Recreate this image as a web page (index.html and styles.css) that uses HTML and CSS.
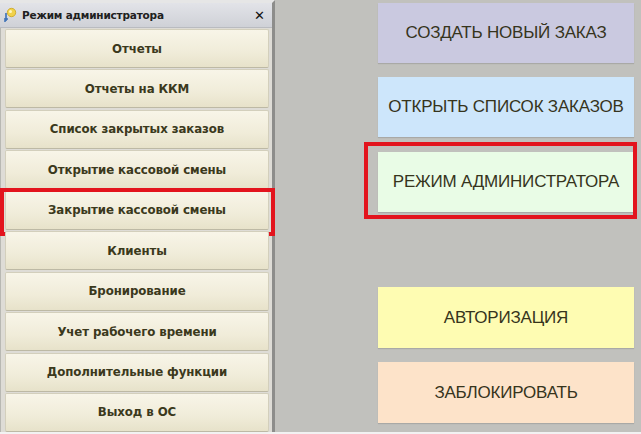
FILE: index.html
```html
<!DOCTYPE html>
<html lang="ru">
<head>
<meta charset="utf-8">
<link rel="stylesheet" href="styles.css">
</head>
<body>
<div class="screen">
  <section class="panel">
    <div class="titlebar">
      <svg class="ticon" width="14" height="16" viewBox="0 0 14 16">
        <path d="M3 6 L3 14 M1 12 L5 12 M1 14 L3 14" stroke="#3a6fb5" stroke-width="1.6" fill="none"/>
        <circle cx="8.5" cy="5.5" r="4.2" fill="#f1d24a" stroke="#c9a320" stroke-width="0.8"/>
        <circle cx="7.5" cy="4.5" r="1.5" fill="#fff6c0"/>
      </svg>
      <span class="ttext">Режим администратора</span>
      <span class="tclose">✕</span>
    </div>
    <div class="menu">
      <div class="mbtn">Отчеты</div>
      <div class="mbtn">Отчеты на ККМ</div>
      <div class="mbtn">Список закрытых заказов</div>
      <div class="mbtn">Открытие кассовой смены</div>
      <div class="mbtn mark-left">Закрытие кассовой смены</div>
      <div class="mbtn">Клиенты</div>
      <div class="mbtn">Бронирование</div>
      <div class="mbtn">Учет рабочего времени</div>
      <div class="mbtn">Дополнительные функции</div>
      <div class="mbtn">Выход в ОС</div>
    </div>
  </section>
  <section class="desk">
    <div class="big b-lav">СОЗДАТЬ НОВЫЙ ЗАКАЗ</div>
    <div class="big b-blue">ОТКРЫТЬ СПИСОК ЗАКАЗОВ</div>
    <div class="big b-green mark-right">РЕЖИМ АДМИНИСТРАТОРА</div>
    <div class="big b-yellow">АВТОРИЗАЦИЯ</div>
    <div class="big b-peach">ЗАБЛОКИРОВАТЬ</div>
  </section>
</div>
</body>
</html>
```

FILE: styles.css
```css
html, body {
  margin: 0;
  padding: 0;
  background: #c1c1bf;
}
.screen {
  width: 641px;
  height: 434px;
  display: flex;
  overflow: hidden;
  background: #c1c1bd;
  border-bottom: 2px solid #f2f2f2;
  box-sizing: border-box;
}
.panel {
  position: relative;
  z-index: 1;
  width: 275px;
  flex: none;
  display: flex;
  flex-direction: column;
  background: #dedcd6;
  border-top: 3px solid #e6e6e6;
  border-right: 3px solid #8d8d8b;
  box-sizing: border-box;
}
.titlebar {
  height: 24px;
  display: flex;
  align-items: center;
  background: linear-gradient(#e2e3e8, #cfd1d7);
  border-bottom: 1px solid #b9bbc0;
  padding: 0 6px 0 3px;
  font-family: "DejaVu Sans", sans-serif;
  font-weight: bold;
  font-size: 10.5px;
  color: #202020;
}
.ticon { flex: none; margin-right: 5px; }
.ttext { flex: 1; letter-spacing: -0.2px; }
.tclose { font-size: 13px; font-weight: bold; color: #111; margin-right: 1px; }
.menu {
  display: flex;
  flex-direction: column;
  gap: 1.45px;
  padding: 1px 3px 0 4px;
  border-left: 1px solid #b8b8b2;
}
.mbtn {
  position: relative;
  height: 39px;
  flex: none;
  display: flex;
  align-items: center;
  justify-content: center;
  box-sizing: border-box;
  background: linear-gradient(#f8f5e8, #f0ecd9 60%, #e7e2ca);
  border: 1px solid #d3cfbc;
  border-bottom-color: #bdb9a5;
  border-radius: 2px;
  font-family: "DejaVu Sans", sans-serif;
  font-weight: bold;
  font-size: 11.8px;
  letter-spacing: -0.1px;
  color: #3b391c;
}
.mark-left::after {
  content: "";
  position: absolute;
  left: -6px;
  right: -7px;
  top: -4px;
  bottom: -7px;
  border: 4px solid #e3141d;
}
.desk {
  flex: 1;
  display: flex;
  flex-direction: column;
  padding: 3px 7px 0 103px;
}
.big {
  position: relative;
  height: 60px;
  flex: none;
  display: flex;
  align-items: center;
  justify-content: center;
  font-family: "Liberation Sans", sans-serif;
  font-size: 17px;
  letter-spacing: -0.2px;
  color: #36341c;
  box-shadow: 0 1px 1px rgba(0,0,0,0.12);
}
.b-lav { background: #cac9e0; }
.b-blue { background: #cde6fb; margin-top: 14px; }
.b-green { background: #e9fce6; margin-top: 15px; }
.b-yellow { background: #fefcb2; margin-top: 75px; height: 61px; }
.b-peach { background: #fde3c9; margin-top: 14px; height: 61px; }
.mark-right::after {
  content: "";
  position: absolute;
  left: -14px;
  right: -3px;
  top: -10px;
  bottom: -7px;
  border: 4px solid #e3141d;
}
```
